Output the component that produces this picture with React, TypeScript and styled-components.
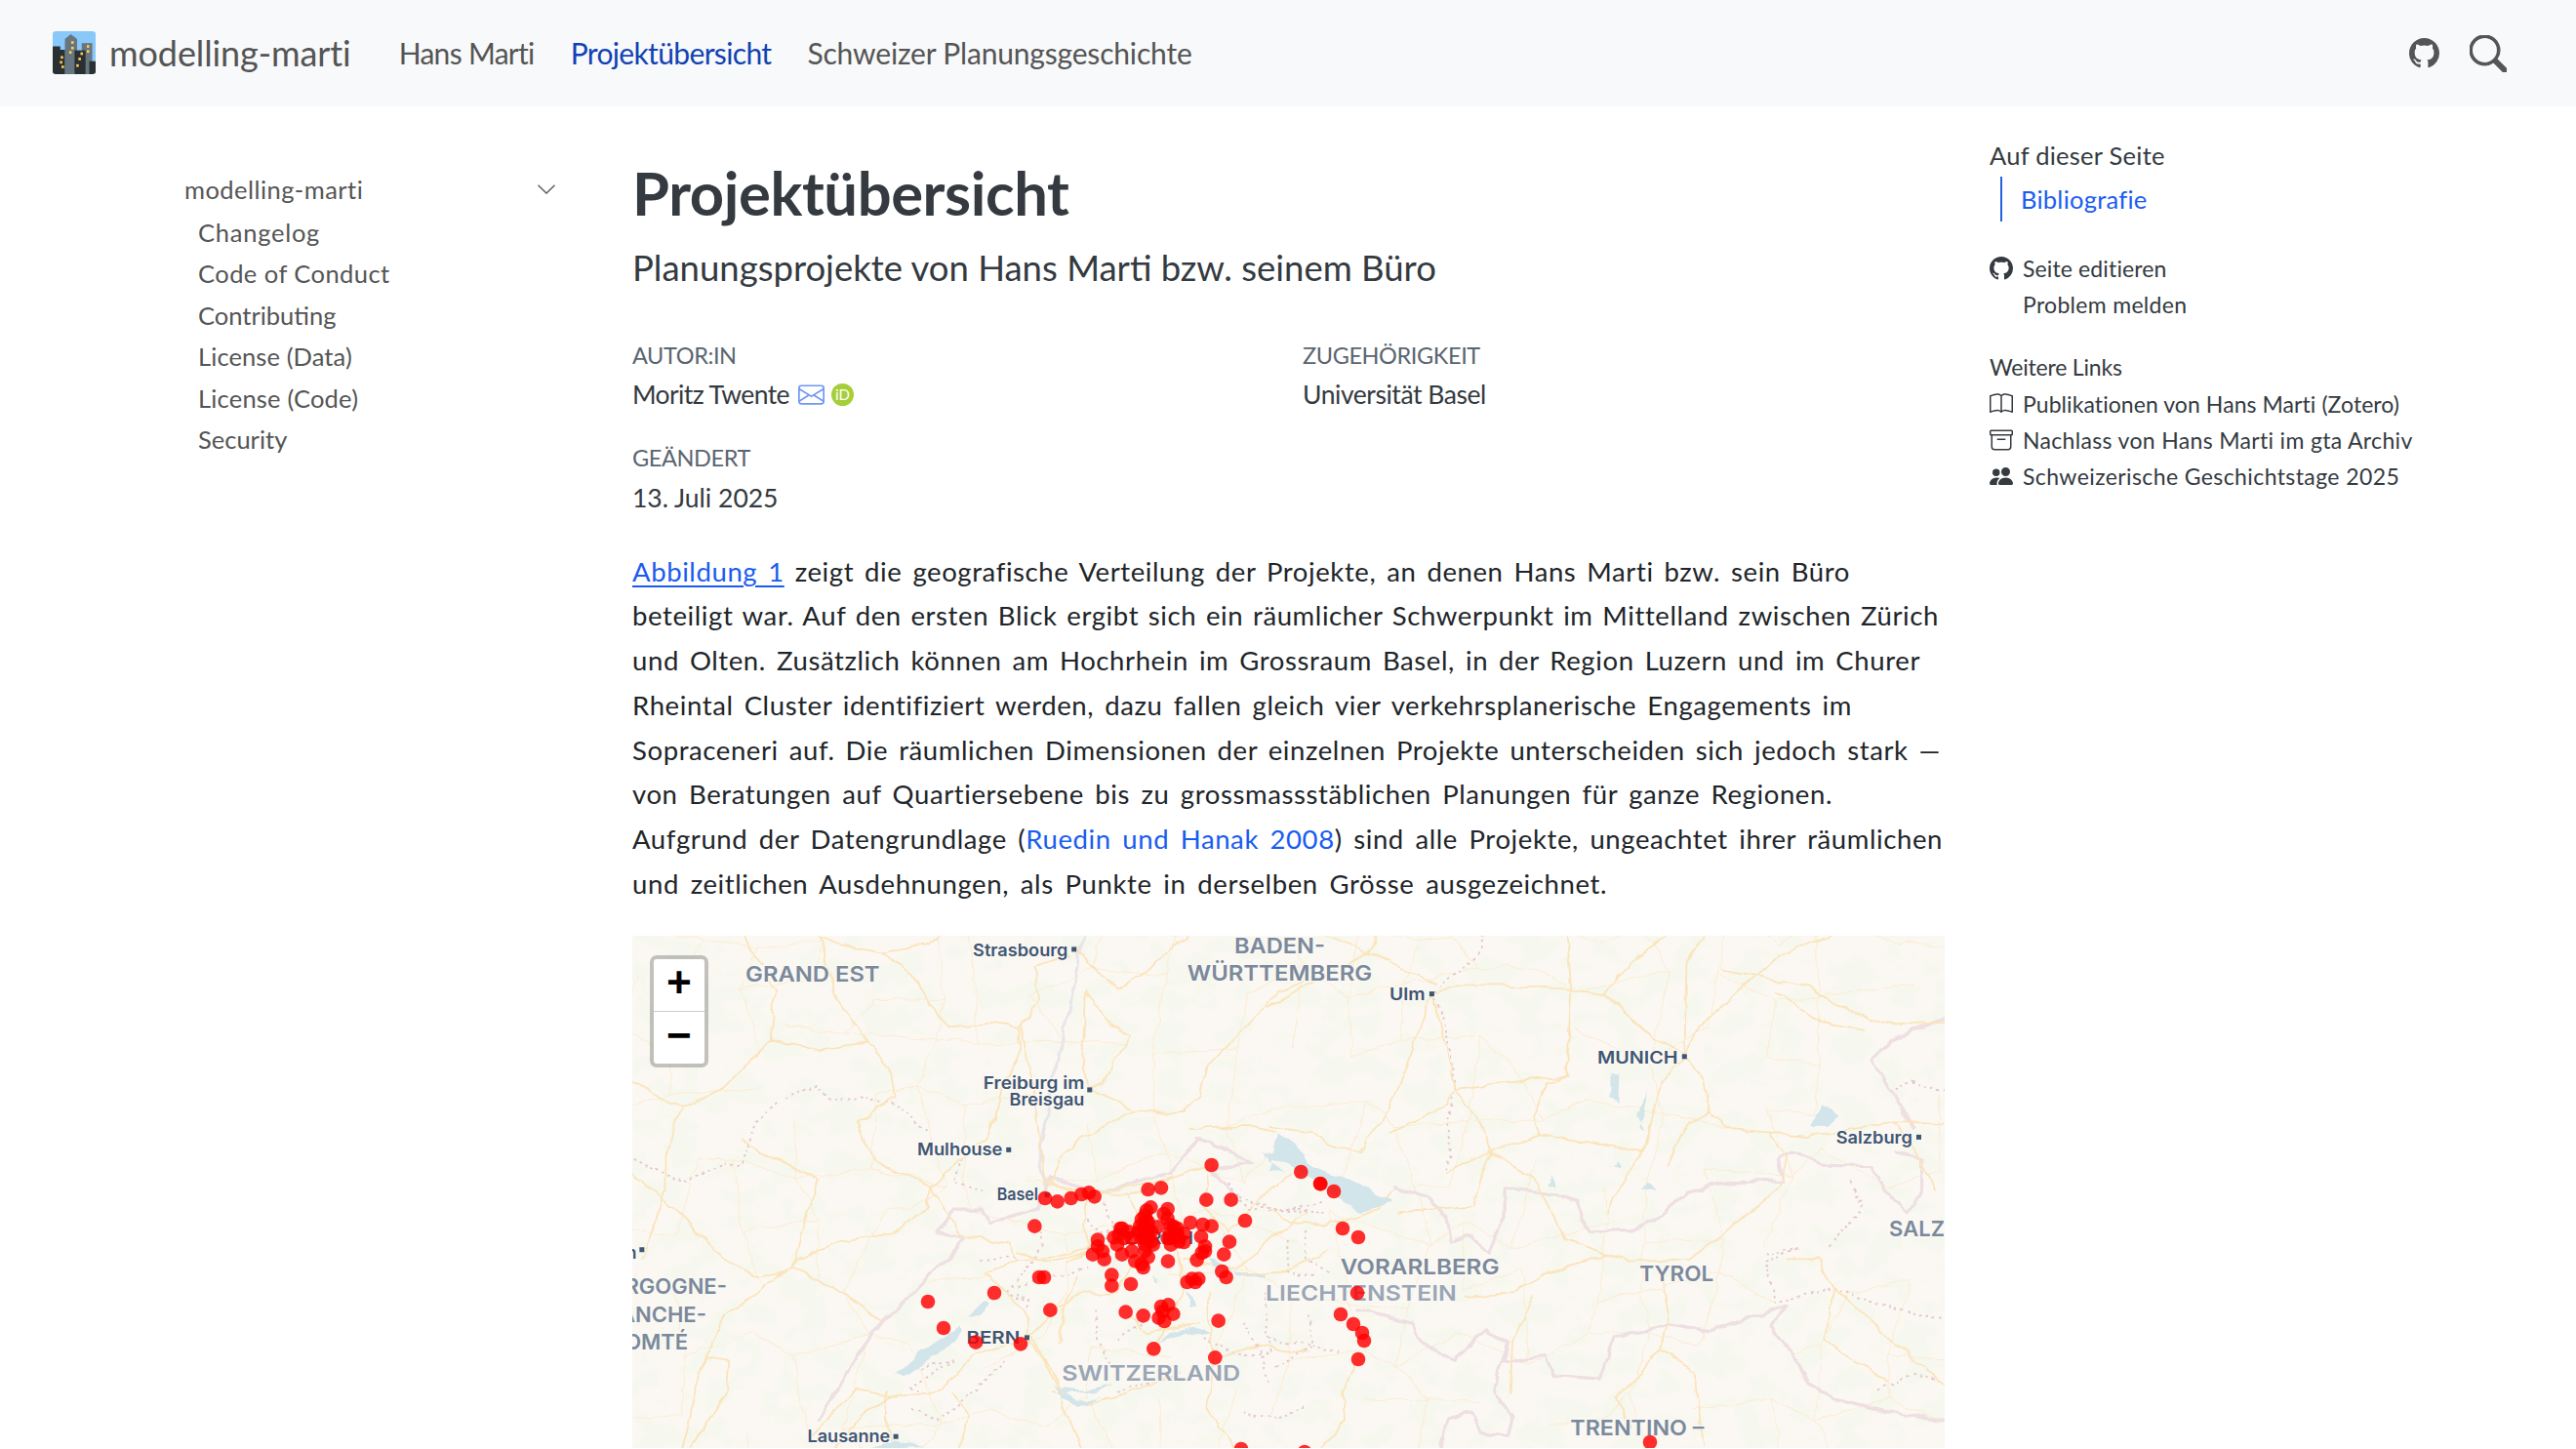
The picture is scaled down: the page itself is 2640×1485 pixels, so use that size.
import React from "react";
import styled, { createGlobalStyle } from "styled-components";
import { BsGithub, BsSearch, BsEnvelope, BsBook, BsArchive, BsPeopleFill } from "react-icons/bs";

const Global = createGlobalStyle`
  html, body { margin: 0; padding: 0; height: 1485px; overflow: hidden; background: #fff; }
  body { font-family: Lato, "Noto Sans", sans-serif; color: #343a40; }
  a { color: inherit; text-decoration: none; }
`;

const Page = styled.div`width: 2640px; height: 1485px; overflow: hidden; display: flex; flex-direction: column;`;

const NavBar = styled.header`
  flex: 0 0 109px; background: #f8f9fa; display: flex; align-items: center;
  padding: 0 71px 0 54px; color: #545555; font-size: 30px;
`;
const Brand = styled.a`
  display: flex; align-items: center; gap: 14px; font-size: 36px; margin-right: 49px;
  letter-spacing: -0.1px; color: #545555; padding-bottom: 2px;
`;
const NavLink = styled.a<{ $active?: boolean; $ls: number }>`
  margin-right: 37px; letter-spacing: ${(p) => p.$ls}px; padding-bottom: 2px;
  color: ${(p) => (p.$active ? "#1142b4" : "#545555")};
`;
const NavIcons = styled.div`margin-left: auto; display: flex; align-items: center; gap: 31px; color: #545555;`;
const SearchIcon = styled(BsSearch)`stroke: currentColor; stroke-width: 0.5;`;

const Columns = styled.div`flex: 1; display: grid; grid-template-columns: 648px 1345px 1fr; min-height: 0;`;

const LeftNav = styled.nav`padding: 62px 79px 0 189px; color: #545555; font-size: 25.5px;`;
const NavRoot = styled.div`
  display: flex; justify-content: space-between; align-items: center; height: 45.5px; letter-spacing: 0.45px;
`;
const NavItem = styled.a<{ $ls?: number }>`
  display: block; height: 42.6px; line-height: 42.6px; margin-left: 14px; letter-spacing: ${(p) => p.$ls ?? 0}px;
`;

const Main = styled.main`display: flex; flex-direction: column; min-height: 0;`;
const Title = styled.h1`
  margin: 53px 0 0; font-size: 61.5px; line-height: 70px; font-weight: 700; letter-spacing: -0.4px; color: #343a40;
`;
const Subtitle = styled.p`margin: 19px 0 0; font-size: 36.5px; line-height: 46px; letter-spacing: 0; color: #343a40;`;
const Meta = styled.div`display: grid; grid-template-columns: 687px 1fr; margin-top: 50.5px;`;
const MetaBlock = styled.div`margin-bottom: 29px;`;
const MetaLabel = styled.div`
  font-size: 23.5px; line-height: 32px; color: #5a6570; letter-spacing: -0.4px; text-transform: uppercase;
`;
const MetaValue = styled.div<{ $ls: number }>`
  display: flex; align-items: center; gap: 7px; font-size: 26.5px; line-height: 40px; margin-top: 4.6px; color: #343a40;
  letter-spacing: ${(p) => p.$ls}px;
`;
const MailIcon = styled(BsEnvelope)`color: #6f97f5; margin-left: 2px;`;

const Para = styled.p`margin: 4px 0 30.5px; font-size: 27.5px; line-height: 45.75px; letter-spacing: 0.6px; color: #212529;`;
const Line = styled.span<{ $w: number }>`
  display: block; width: ${(p) => p.$w}px; white-space: nowrap; text-align: justify; text-align-last: justify;
`;
const Xref = styled.a`color: #1a5cf0; text-decoration: underline; text-underline-offset: 4px; text-decoration-thickness: 1.5px;`;
const Cite = styled.a`color: #1a5cf0;`;

const MapBox = styled.div`position: relative; height: 525px; background: #fbf8f3; overflow: hidden;`;
const MapSvg = styled.svg`display: block; width: 1345px; height: 525px;`;
const Roads = styled.g`fill: none; stroke: #fbe4bb; stroke-width: 1.8; stroke-linejoin: round; stroke-linecap: round; path { vector-effect: non-scaling-stroke; }`;
const MinorRoads = styled.g`fill: none; stroke: #fbedd6; stroke-width: 1.1; stroke-linejoin: round; stroke-linecap: round;`;
const Borders = styled.g`fill: none; stroke: #eedfe2; stroke-width: 3.2; stroke-linejoin: round; path { vector-effect: non-scaling-stroke; }`;
const Cantons = styled.g`fill: none; stroke: #e3c6cc; stroke-width: 1.9; stroke-dasharray: 2.5 4; path { vector-effect: non-scaling-stroke; }`;
const River = styled.g`fill: none; stroke: #e8e5ea; stroke-width: 3; stroke-linejoin: round; path { vector-effect: non-scaling-stroke; }`;
const Water = styled.g`fill: #d2e5ea; stroke: none;`;
const Label = styled.text<{ $kind: "region" | "faint" | "city" }>`
  font-family: Inter, "Noto Sans", sans-serif; font-weight: 600;
  font-size: ${(p) => (p.$kind === "city" ? 17.5 : 22)}px;
  fill: ${(p) => (p.$kind === "city" ? "#3f5673" : p.$kind === "faint" ? "#9aa6b6" : "#7a899c")};
  paint-order: stroke; stroke: #fbf8f3; stroke-width: 2.5;
`;
const CityDot = styled.rect`fill: #3f5673;`;
const Dot = styled.circle`fill: #ff0000; fill-opacity: 0.82;`;

const ZoomControl = styled.div`
  position: absolute; left: 18px; top: 20px; width: 52px; border: 4px solid rgba(0,0,0,.22); border-radius: 7px;
  background-clip: padding-box; display: flex; flex-direction: column;
`;
const ZoomBtn = styled.a<{ $first?: boolean }>`
  height: 53px; display: flex; align-items: center; justify-content: center; background: #fff;
  font-family: "Liberation Mono", monospace; font-weight: 700; font-size: 44px; color: #000;
  border-bottom: ${(p) => (p.$first ? "1px solid #ccc" : "none")};
  border-radius: ${(p) => (p.$first ? "4px 4px 0 0" : "0 0 4px 4px")};
`;

const RightNav = styled.aside`padding: 30.5px 0 0 46px; font-size: 23px; color: #343a40;`;
const TocTitle = styled.div`line-height: 38px; font-size: 25.5px; letter-spacing: 0.25px;`;
const TocLink = styled.a`
  display: block; margin: 3px 0 0 11px; border-left: 2px solid #2761e3; padding-left: 19px; line-height: 46px; color: #1a5cf0; font-size: 25.5px; letter-spacing: 0.25px;
`;
const ToolRow = styled.a<{ $ls: number; $gap?: number }>`
  display: flex; align-items: center; gap: 10px; height: 37px; margin-top: ${(p) => p.$gap ?? 0}px; letter-spacing: ${(p) => p.$ls}px;
`;
const IconSlot = styled.span`width: 24px; flex: none; display: flex; justify-content: center; color: #343a40;`;
const ToolHeading = styled.div`margin: 27px 0 1px; line-height: 37px; letter-spacing: -0.2px;`;

const dots: [number, number][] = [
  [725,75],[1000,96],[1060,133],[530,150],[570,145],[213,177],[251,187],[293,177],[325,165],[348,160],[365,172],
  [709,182],[785,182],[181,263],[828,246],[538,205],[525,215],[590,210],[578,225],[510,242],[525,245],[590,240],
  [600,260],[660,252],[698,258],[725,263],[450,270],[440,290],[425,298],[470,280],[500,280],[520,270],[560,265],
  [620,270],[640,285],[693,295],[375,305],[375,325],[435,320],[450,350],[480,340],[530,300],[520,320],[545,320],
  [600,320],[640,312],[610,295],[590,300],[780,311],[705,325],[705,340],[695,345],[763,350],[680,367],[360,350],
  [390,340],[395,365],[530,358],[490,370],[510,380],[515,390],[591,371],[757,402],[770,420],[418,413],[418,446],
  [477,441],[195,420],[210,420],[650,435],[665,425],[685,425],[675,435],[57,468],[229,521],[461,527],[515,538],
  [570,510],[592,505],[607,533],[575,525],[563,545],[580,555],[746,554],[138,625],[0,620],[547,640],[736,667],
  [520,260],[530,285],[540,310],[505,262],[480,300],[600,300],[620,290],[520,230],[530,270],[525,300],
  [530,250],[540,280],[510,300],[515,275],[600,280],[625,310],[610,265],[455,300],[445,270],[520,340],
];
const outerDots: [number, number][] = [
  [951,1335],[967,1362],[1353,1214],[1367,1222],[1376,1260],[1392,1269],[1391,1326],[1374,1348],[1387,1358],
  [1396,1367],[1398,1375],[1392,1394],[1691,1479],[1272,1486],[1337,1489],
];

const a = (x: number) => -8 + x * 0.4464;
const b = (x: number) => 652 + x * 0.4464;
const y = (v: number) => -10 + v * 0.3413;

type L = [string, number, number, number, "region" | "faint" | "city"];
const labels: L[] = [
  ["GRAND EST", a(278), a(586), y(168), "region"],
  ["Strasbourg", a(800), a(1018), y(90), "city"],
  ["BADEN-", a(1400), b(130), y(82), "region"],
  ["WÜRTTEMBERG", a(1292), b(238), y(165), "region"],
  ["Freiburg im", a(824), a(1056), y(488), "city"],
  ["Breisgau", a(884), a(1056), y(540), "city"],
  ["Mulhouse", a(672), a(868), y(690), "city"],
  ["Basel", a(855), a(950), y(824), "city"],
  ["BERN", a(785), a(908), y(1254), "city"],
  ["SWITZERLAND", a(1004), a(1414), y(1366), "faint"],
  ["Lausanne", a(420), a(610), y(1550), "city"],
  ["ZURICH", 505, 575, 316, "city"],
  ["LIECHTENSTEIN", a(1472), b(432), y(1125), "faint"],
  ["Ulm", b(278), b(360), y(222), "city"],
  ["MUNICH", b(755), b(940), y(412), "city"],
  ["Salzburg", b(1303), b(1478), y(652), "city"],
  ["VORARLBERG", b(165), b(530), y(1047), "region"],
  ["TYROL", b(852), b(1022), y(1067), "region"],
  ["TRENTINO –", b(693), b(1000), y(1530), "region"],
];
const cut: [string, number, number][] = [
  ["BOURGOGNE-", a(235), y(1105)],
  ["FRANCHE-", a(188), y(1190)],
  ["COMTÉ", a(146), y(1272)],
];
const squares: [number, number][] = [
  [a(1032), y(70)], [a(1068), y(492)], [a(882), y(672)], [a(970), y(808)], [a(40), y(972)], [a(924), y(1236)],
  [a(623), y(1533)], [b(375), y(204)], [b(955), y(392)], [b(1493), y(634)],
];

const roadsA = [
  "M275 30L345 190L335 345L220 495L130 545L95 690L95 800L40 1000",
  "M450 30L480 200L560 350L610 430L620 510L535 590L575 710L700 785L695 850L610 925L500 945L395 1000L385 1030L425 1050L520 1120L590 1190",
  "M590 80L650 130L740 300L840 290L905 300L910 370L870 470L850 580L830 640L770 700L700 785",
  "M720 30L690 60L590 80L500 60L450 30",
  "M335 345L450 370L560 350","M0 460L130 545","M385 1020L415 880L445 760L330 690L270 640",
  "M910 300L940 500L965 780","M1060 200L1120 300L1160 330L1100 470L1070 490L1110 520L1170 555L1280 560L1320 510L1340 420L1430 300L1500 200L1568 160",
  "M1020 90L940 120L950 220L910 300","M1040 70L1080 130L1130 190L1210 130L1260 60L1290 30","M1070 490L1050 420L1060 200",
  "M1170 555L1050 640L1000 700L975 780","M975 780L1100 800L1250 760L1340 720",
  "M385 1030L350 1045L230 1180L185 1300L130 1568","M700 785L740 860L770 930L880 950L900 1000L830 1050L880 1100L930 1180L925 1240L980 1330L1010 1420",
  "M925 1240L800 1290L730 1390L610 1420L530 1390L430 1530","M600 1400L595 1470L620 1568","M1010 1010L1100 960L1160 920","M900 1000L1000 990L1080 960",
  "M1280 1000L1400 1030L1430 1010L1500 920L1568 860","M1340 1100L1350 1300L1340 1450L1400 1568","M980 1400L1040 1440L1140 1410L1280 1340","M0 720L40 760L230 1000L300 1050L385 1030",
  "M1300 610L1430 600L1500 620","M1040 1050L1010 1120L1000 1250","M190 1300L240 1310L235 1400L150 1568","M1160 1180L1200 1220L1320 1190",
  "M480 1568L560 1450L610 1420","M750 1400L790 1470L770 1568","M1000 1420L1050 1568","M1350 1300L1450 1260L1568 1280",
];
const roadsB = [
  "M0 240L240 70L245 30","M0 600L40 610L100 620L150 660L210 680L225 630L260 590L310 450L360 260L375 205L430 180L580 180L690 190L770 205L870 320L955 390",
  "M685 30L695 190L685 450L590 460L430 490L375 205","M770 205L800 150L910 30","M1000 30L960 100L955 390",
  "M1290 30L1170 90L1100 170L1050 230L990 300L955 390","M955 390L1000 460L1010 560L1060 610L1240 630L1440 590L1552 590",
  "M955 390L900 480L860 680L790 820L780 860","M685 450L640 470L610 570L625 625L500 680L410 740",
  "M430 490L490 600L510 680L610 760L650 860L680 940L780 985L640 1040L560 1100L450 1110","M625 625L700 640L860 680",
  "M510 680L490 750L470 840L300 860","M780 985L830 1010L960 1000L1040 930L1170 790L1190 700L1150 620",
  "M905 1070L920 1180L900 1270L980 1340L1000 1568","M900 1270L800 1420L830 1500","M610 1110L560 1250L555 1400",
  "M205 1300L170 1400L175 1480L120 1568","M1190 1000L1260 1000L1300 1090L1420 1230L1552 1380","M0 850L50 890L130 900L250 850L290 790",
  "M1040 130L1240 180L1300 240L1440 300L1552 290","M1170 200L1270 290L1370 310","M280 620L410 540L430 490","M1440 590L1490 690L1530 790",
  "M130 30L250 90L380 170","M1300 1090L1280 1240L1420 1370","M1010 560L950 620L920 720",
];
const bordersB = [
  "M285 780L370 820L410 880L420 950L460 930L505 985L540 870L540 785L630 800L710 830L735 920L830 915L890 880L960 800L1060 770L1180 765L1170 700L1200 680L1270 715L1385 720L1400 770L1470 860L1500 790L1500 700L1440 680",
  "M1552 280L1430 340L1385 400L1440 520L1480 610",
  "M200 1150L330 1190L350 1250L430 1305L500 1210L550 1250L540 1310L630 1290L660 1350L760 1360L790 1240L920 1195L1010 1215L1190 1140L1155 1200L1210 1300L1240 1380L1300 1420L1400 1450L1552 1490",
  "M395 1568L410 1480L465 1460L490 1520L550 1530L560 1480L520 1400L545 1250",
];
const bordersA = [
  "M440 1490L570 1220L740 1000L780 940L720 920L760 850L820 850L840 890L950 850L975 760L1100 800L1250 740L1320 640L1440 710L1350 730L1400 800",
];
const cantonsA = [
  "M370 520L440 480L470 520L540 520L620 530L700 620","M20 700L80 740L150 770L230 710L270 720L300 590L350 530",
  "M770 700L760 770L830 800","M820 1000L900 990","M950 900L960 960L880 1100L930 1130L920 1160","M1080 1160L1090 1250L1130 1340",
  "M680 1330L760 1300L650 1390L700 1400","M1470 1100L1480 1280L1420 1290L1330 1240","M1400 800L1480 850L1568 860","M1060 880L1120 950","M660 1450L720 1480L800 1400L880 1300","M1130 1400L1280 1340","M1420 1460L1500 1480L1568 1440",
];
const cantonsB = [
  "M490 30L490 80L420 150L375 205L400 280L430 480L410 600L420 690L405 740","M1140 980L1220 970L1140 1000L1160 1130L1240 1100L1300 1090L1380 1130L1552 1180",
  "M1285 960L1320 910L1365 840L1340 770","M1440 490L1480 465L1552 500","M0 860L40 850L130 830","M90 920L85 1000L150 1040","M90 1170L100 1260L10 1330","M1400 1390L1480 1350L1552 1370","M0 1240L100 1260L160 1280",
];

function buildMinorRoads(): string[] {
  let seed = 41;
  const rnd = () => {
    seed = (seed * 16807) % 2147483647;
    return seed / 2147483647;
  };
  const step = 62;
  const cols = 23;
  const rows = 10;
  const pts: [number, number][][] = [];
  for (let r = 0; r < rows; r++) {
    const row: [number, number][] = [];
    for (let c = 0; c < cols; c++) {
      row.push([c * step - 10 + (rnd() - 0.5) * 44, r * step - 10 + (rnd() - 0.5) * 44]);
    }
    pts.push(row);
  }
  const out: string[] = [];
  for (let r = 0; r < rows; r++) {
    for (let c = 0; c < cols; c++) {
      const p = pts[r][c];
      if (c + 1 < cols && rnd() < 0.55) out.push(`M${p[0].toFixed(1)} ${p[1].toFixed(1)}L${pts[r][c + 1][0].toFixed(1)} ${pts[r][c + 1][1].toFixed(1)}`);
      if (r + 1 < rows && rnd() < 0.55) out.push(`M${p[0].toFixed(1)} ${p[1].toFixed(1)}L${pts[r + 1][c][0].toFixed(1)} ${pts[r + 1][c][1].toFixed(1)}`);
    }
  }
  return out;
}
const minorRoads = buildMinorRoads();

function MapArt() {
  return (
    <MapSvg viewBox="0 0 1345 525">
      <defs>
        <filter id="forest" x="0" y="0" width="100%" height="100%">
          <feTurbulence type="fractalNoise" baseFrequency="0.03 0.04" numOctaves="4" seed="7" />
          <feColorMatrix values="0 0 0 0 0.90  0 0 0 0 0.93  0 0 0 0 0.82  0 0 0 7 -3.2" />
        </filter>
        <filter id="wiggle" x="-2%" y="-2%" width="104%" height="104%">
          <feTurbulence type="fractalNoise" baseFrequency="0.05" numOctaves="2" seed="3" result="n" />
          <feDisplacementMap in="SourceGraphic" in2="n" scale="9" xChannelSelector="R" yChannelSelector="G" />
        </filter>
      </defs>
      <rect width="1345" height="525" filter="url(#forest)" opacity="0.5" />
      <g filter="url(#wiggle)">
        <MinorRoads>{minorRoads.map((d) => <path key={d} d={d} />)}</MinorRoads>
        <g transform="translate(-8,-10) scale(0.4464,0.3413)">
          <River><path d="M1060 30L1040 90L1020 250L960 620L950 720L970 780" /></River>
          <Borders>{bordersA.map((d) => <path key={d} d={d} />)}</Borders>
          <Cantons>{cantonsA.map((d) => <path key={d} d={d} />)}</Cantons>
          <Roads>{roadsA.map((d) => <path key={d} d={d} />)}</Roads>
          <Water>
            <path d="M625 1345L700 1260L770 1200L772 1225L720 1290L640 1352Z" />
            <path d="M1500 625L1568 690L1568 740L1470 680L1540 690Z" />
            <path d="M560 1568L620 1545L690 1568Z" />
            <path d="M830 1120L790 1170L810 1170L840 1130Z" />
            <path d="M985 1380L1040 1430L1100 1410L1040 1445L1000 1420Z" />
          </Water>
        </g>
        <g transform="translate(652,-10) scale(0.4464,0.3413)">
          <Borders>{bordersB.map((d) => <path key={d} d={d} />)}</Borders>
          <Cantons>{cantonsB.map((d) => <path key={d} d={d} />)}</Cantons>
          <Roads>{roadsB.map((d) => <path key={d} d={d} />)}</Roads>
          <Water>
            <path d="M25 625L100 720L230 790L285 830L210 860L170 830L100 760L0 680L0 700L40 740L0 730Z" />
            <path d="M785 440L805 440L803 530L785 510Z" />
            <path d="M870 495L855 610L865 615L845 570Z" />
            <path d="M1245 600L1270 540L1305 570L1280 600Z" />
            <path d="M800 700L810 720L795 720Z" />
            <path d="M870 770L885 790L860 790Z" />
            <path d="M650 740L655 790L640 780Z" />
          </Water>
        </g>
        <g transform="translate(352,210) scale(0.3333)">
          <Water>
            <path d="M880 30L960 50L1000 80L940 70L900 50Z" />
            <path d="M715 360L790 405L730 385Z" />
            <path d="M790 405L890 405L888 418L800 418Z" />
            <path d="M600 585L660 570L720 590L700 600L640 590L560 620Z" />
            <path d="M645 460L680 510L660 515Z" />
            <path d="M545 415L560 440L550 440Z" />
            <path d="M250 760L330 770L430 745L380 770L270 780Z" />
          </Water>
          <Roads>
            <path d="M220 130L340 170L400 160L470 170L600 110" /><path d="M340 170L330 260L350 340L230 370L130 340" />
            <path d="M470 170L500 240L510 330L430 470L300 470L170 600" /><path d="M620 340L640 460L570 600L530 660" />
            <path d="M720 100L700 200L780 280L870 180L970 100" /><path d="M820 410L950 400L1080 340" /><path d="M170 600L230 720L270 780" />
          </Roads>
          <Cantons>
            <path d="M390 190L420 260L340 340" /><path d="M130 450L230 420L340 390" /><path d="M780 130L840 210L1000 210L1080 230" /><path d="M820 560L870 640L900 740" /><path d="M950 300L960 400L1040 420" /><path d="M130 470L180 500" /><path d="M440 610L520 560" />
          </Cantons>
        </g>
      </g>
      {squares.map(([sx, sy]) => <CityDot key={sx} x={sx - 2.5} y={sy - 2.5} width="5" height="5" />)}
      {labels.map(([t, x1, x2, by, k]) => (
        <Label key={t} $kind={k} x={x1} y={by} textLength={x2 - x1} lengthAdjust="spacingAndGlyphs">{t}</Label>
      ))}
      {cut.map(([t, x, by]) => <Label key={t} $kind="region" x={x} y={by} textAnchor="end">{t}</Label>)}
      <Label $kind="city" x={a(28)} y={y(998)} textAnchor="end">Besançon</Label>
      <Label $kind="region" x={b(1425)} y={y(932)}>SALZBURG</Label>
      <g transform="translate(352,210) scale(0.3333)">
        {dots.map(([cx, cy], i) => <Dot key={i} cx={cx} cy={cy} r="22" />)}
      </g>
      <g transform="translate(-648,-960)">
        {outerDots.map(([cx, cy], i) => <Dot key={i} cx={cx} cy={cy} r="7.3" />)}
      </g>
    </MapSvg>
  );
}

function Logo() {
  return (
    <svg width="44" height="44" viewBox="0 0 102 130" preserveAspectRatio="none">
      <rect width="102" height="130" rx="8" fill="#89c9fa" />
      <path d="M29 130V24L43 9L58 24V130Z" fill="#66757f" />
      <path d="M69 130V36H94V130Z" fill="#66757f" />
      <path d="M0 130V46H18V56H29V130H8A8 8 0 0 1 0 122Z" fill="#292f33" />
      <path d="M52 130V58H78V130Z" fill="#292f33" />
      <path d="M87 130V91H102V122A8 8 0 0 1 94 130Z" fill="#292f33" />
      <g fill="#ffcc4d">
        {[[22,79],[20,94],[24,108],[47,34],[47,51],[42,64],[69,68],[64,84],[59,104],[84,46],[84,61]].map(([wx, wy]) => (
          <rect key={wx + "-" + wy} x={wx - 3} y={wy - 4} width="6" height="8" />
        ))}
      </g>
    </svg>
  );
}

function Chevron() {
  return (
    <svg width="18" height="10" viewBox="0 0 18 10" fill="none" stroke="currentColor" strokeWidth="1.3">
      <path d="M0.5 0.8L9 9L17.5 0.8" />
    </svg>
  );
}

function Orcid() {
  return (
    <svg width="23" height="23" viewBox="0 0 23 23">
      <circle cx="11.5" cy="11.5" r="11.5" fill="#a6ce39" />
      <text x="11.5" y="17" textAnchor="middle" fontFamily="Lato, sans-serif" fontSize="15" fill="#fff" fontWeight="400" letterSpacing="0">iD</text>
    </svg>
  );
}

export default function App() {
  return (
    <Page>
      <Global />
      <NavBar>
        <Brand href="#"><Logo />modelling-marti</Brand>
        <NavLink href="#" $ls={-0.7}>Hans Marti</NavLink>
        <NavLink href="#" $active $ls={-0.64}>Projektübersicht</NavLink>
        <NavLink href="#" $ls={-0.18}>Schweizer Planungsgeschichte</NavLink>
        <NavIcons>
          <BsGithub size={31} />
          <SearchIcon size={38} />
        </NavIcons>
      </NavBar>
      <Columns>
        <LeftNav>
          <NavRoot>modelling-marti<Chevron /></NavRoot>
          <NavItem href="#" $ls={0.75}>Changelog</NavItem>
          <NavItem href="#" $ls={0.45}>Code of Conduct</NavItem>
          <NavItem href="#">Contributing</NavItem>
          <NavItem href="#" $ls={0.1}>License (Data)</NavItem>
          <NavItem href="#" $ls={0.2}>License (Code)</NavItem>
          <NavItem href="#">Security</NavItem>
        </LeftNav>
        <Main>
          <Title>Projektübersicht</Title>
          <Subtitle>Planungsprojekte von Hans Marti bzw. seinem Büro</Subtitle>
          <Meta>
            <MetaBlock>
              <MetaLabel>Autor:in</MetaLabel>
              <MetaValue $ls={-0.6}>Moritz Twente <MailIcon size={27} /><Orcid /></MetaValue>
            </MetaBlock>
            <MetaBlock>
              <MetaLabel>Zugehörigkeit</MetaLabel>
              <MetaValue $ls={-0.45}>Universität Basel</MetaValue>
            </MetaBlock>
            <MetaBlock>
              <MetaLabel>Geändert</MetaLabel>
              <MetaValue $ls={0}>13. Juli 2025</MetaValue>
            </MetaBlock>
          </Meta>
          <Para>
            <Line $w={1248}><Xref href="#">Abbildung 1</Xref> zeigt die geografische Verteilung der Projekte, an denen Hans Marti bzw. sein Büro</Line>
            <Line $w={1339}>beteiligt war. Auf den ersten Blick ergibt sich ein räumlicher Schwerpunkt im Mittelland zwischen Zürich</Line>
            <Line $w={1320}>und Olten. Zusätzlich können am Hochrhein im Grossraum Basel, in der Region Luzern und im Churer</Line>
            <Line $w={1250}>Rheintal Cluster identifiziert werden, dazu fallen gleich vier verkehrsplanerische Engagements im</Line>
            <Line $w={1341}>Sopraceneri auf. Die räumlichen Dimensionen der einzelnen Projekte unterscheiden sich jedoch stark —</Line>
            <Line $w={1230}>von Beratungen auf Quartiersebene bis zu grossmassstäblichen Planungen für ganze Regionen.</Line>
            <Line $w={1343}>Aufgrund der Datengrundlage (<Cite href="#">Ruedin und Hanak 2008</Cite>) sind alle Projekte, ungeachtet ihrer räumlichen</Line>
            <Line $w={999}>und zeitlichen Ausdehnungen, als Punkte in derselben Grösse ausgezeichnet.</Line>
          </Para>
          <MapBox>
            <MapArt />
            <ZoomControl>
              <ZoomBtn href="#" $first>+</ZoomBtn>
              <ZoomBtn href="#">−</ZoomBtn>
            </ZoomControl>
          </MapBox>
        </Main>
        <RightNav>
          <TocTitle>Auf dieser Seite</TocTitle>
          <TocLink href="#">Bibliografie</TocLink>
          <ToolRow href="#" $gap={30} $ls={0.13}><IconSlot><BsGithub size={24} /></IconSlot>Seite editieren</ToolRow>
          <ToolRow href="#" $ls={0.3}><IconSlot />Problem melden</ToolRow>
          <ToolHeading>Weitere Links</ToolHeading>
          <ToolRow href="#" $ls={0.07}><IconSlot><BsBook size={24} /></IconSlot>Publikationen von Hans Marti (Zotero)</ToolRow>
          <ToolRow href="#" $ls={0.33}><IconSlot><BsArchive size={24} /></IconSlot>Nachlass von Hans Marti im gta Archiv</ToolRow>
          <ToolRow href="#" $ls={0.4}><IconSlot><BsPeopleFill size={24} /></IconSlot>Schweizerische Geschichtstage 2025</ToolRow>
        </RightNav>
      </Columns>
    </Page>
  );
}
